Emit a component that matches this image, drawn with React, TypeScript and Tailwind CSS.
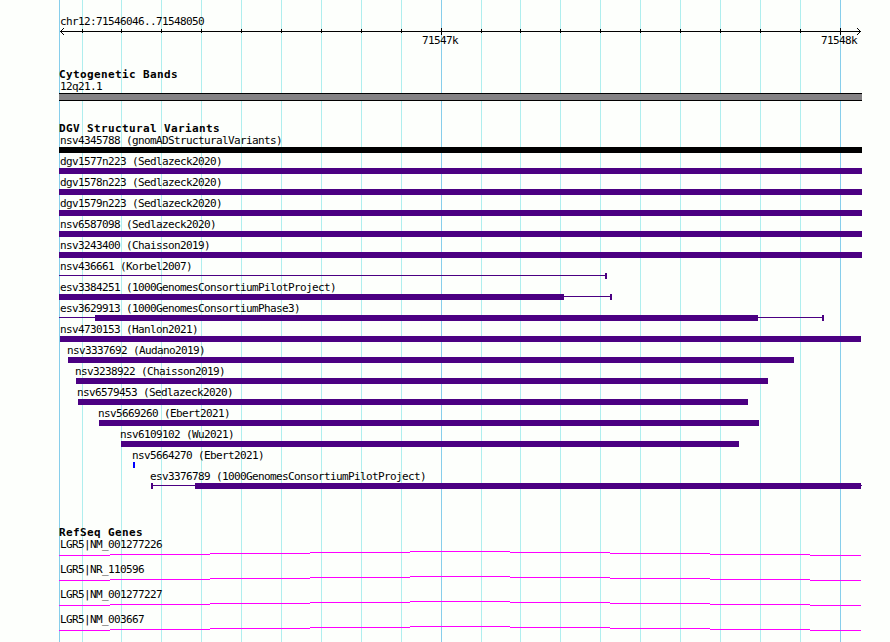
import { clsx } from "clsx";

interface Segment {
  from: number;
  to: number;
  kind: "thick" | "thin";
}

interface Variant {
  name: string;
  labelX: number;
  color?: string;
  segments: Segment[];
}

// x coordinates are measured from the left edge of the browser panel
const thick = (from: number, to: number): Segment => ({ from, to, kind: "thick" });
const thin = (from: number, to: number): Segment => ({ from, to, kind: "thin" });

const majorLines = [59, 441, 840];
const minorLines = [82, 121, 161, 201, 241, 281, 321, 361, 401, 481, 520, 560, 600, 640, 680, 720, 760, 800];

const variants: Variant[] = [
  { name: "nsv4345788 (gnomADStructuralVariants)", labelX: 60, color: "#000000", segments: [thick(59, 862)] },
  { name: "dgv1577n223 (Sedlazeck2020)", labelX: 60, segments: [thick(59, 862)] },
  { name: "dgv1578n223 (Sedlazeck2020)", labelX: 60, segments: [thick(59, 862)] },
  { name: "dgv1579n223 (Sedlazeck2020)", labelX: 60, segments: [thick(59, 862)] },
  { name: "nsv6587098 (Sedlazeck2020)", labelX: 60, segments: [thick(59, 862)] },
  { name: "nsv3243400 (Chaisson2019)", labelX: 60, segments: [thick(59, 862)] },
  { name: "nsv436661 (Korbel2007)", labelX: 60, segments: [thin(59, 605), thick(605, 607)] },
  {
    name: "esv3384251 (1000GenomesConsortiumPilotProject)",
    labelX: 60,
    segments: [thick(59, 564), thin(564, 610), thick(610, 612)],
  },
  {
    name: "esv3629913 (1000GenomesConsortiumPhase3)",
    labelX: 60,
    segments: [thin(59, 95), thick(95, 758), thin(758, 822), thick(822, 824)],
  },
  { name: "nsv4730153 (Hanlon2021)", labelX: 60, segments: [thick(60, 861)] },
  { name: "nsv3337692 (Audano2019)", labelX: 67, segments: [thick(68, 794)] },
  { name: "nsv3238922 (Chaisson2019)", labelX: 75, segments: [thick(76, 768)] },
  { name: "nsv6579453 (Sedlazeck2020)", labelX: 77, segments: [thick(78, 748)] },
  { name: "nsv5669260 (Ebert2021)", labelX: 98, segments: [thick(99, 759)] },
  { name: "nsv6109102 (Wu2021)", labelX: 120, segments: [thick(121, 739)] },
  { name: "nsv5664270 (Ebert2021)", labelX: 132, color: "#0000ff", segments: [thick(133, 135)] },
  {
    name: "esv3376789 (1000GenomesConsortiumPilotProject)",
    labelX: 150,
    segments: [thick(151, 153), thin(153, 195), thick(195, 861), thin(861, 862)],
  },
];

const genes = ["LGR5|NM_001277226", "LGR5|NR_110596", "LGR5|NM_001277227", "LGR5|NM_003667"];

// intron hat, one pixel step per 100px
const intronSteps = [
  [59, 110, 4],
  [110, 210, 3],
  [210, 310, 2],
  [310, 410, 1],
  [410, 510, 0],
  [510, 610, 1],
  [610, 710, 2],
  [710, 810, 3],
  [810, 861, 4],
];

function GridLines() {
  return (
    <svg className="absolute inset-0" width="890" height="642" shapeRendering="crispEdges">
      {minorLines.map((x) => <rect key={x} x={x} y="0" width="1" height="642" fill="#afeeee" />)}
      {majorLines.map((x) => <rect key={x} x={x} y="0" width="1" height="642" fill="#87ceeb" />)}
    </svg>
  );
}

function Ruler() {
  return (
    <svg className="block" width="890" height="7" shapeRendering="crispEdges">
      <rect x="60" y="3" width="801" height="1" />
      {minorLines.map((x) => <rect key={x} x={x} y="1" width="1" height="4" />)}
      {majorLines.slice(1).map((x) => <rect key={x} x={x} y="0" width="1" height="7" />)}
      {[1, 2, 3].map((d) => (
        <g key={d}>
          <rect x={60 + d} y={3 - d} width="1" height="1" />
          <rect x={60 + d} y={3 + d} width="1" height="1" />
          <rect x={860 - d} y={3 - d} width="1" height="1" />
          <rect x={860 - d} y={3 + d} width="1" height="1" />
        </g>
      ))}
    </svg>
  );
}

function TrackTitle({ children }: { children: string }) {
  return <h2 className="pl-[59px] h-3 leading-[13px] font-bold tracking-[0.38px]">{children}</h2>;
}

function VariantRow({ variant }: { variant: Variant }) {
  const { name, labelX, segments, color = "#4b0082" } = variant;
  return (
    <div className="h-[21px]">
      <div className="h-[13px]" style={{ paddingLeft: labelX }}>{name}</div>
      <div className="flex h-1.5" style={{ paddingLeft: segments[0].from }}>
        {segments.map((s) => (
          <div
            key={s.from}
            className={clsx("shrink-0", s.kind === "thick" ? "h-1.5" : "h-px mt-0.5")}
            style={{ width: s.to - s.from, backgroundColor: color }}
          />
        ))}
      </div>
    </div>
  );
}

function GeneRow({ name }: { name: string }) {
  return (
    <div className="h-[25px]">
      <div className="h-[13px] pl-[60px]">{name}</div>
      <svg className="block" width="890" height="5" shapeRendering="crispEdges">
        {intronSteps.map(([from, to, y]) => (
          <rect key={from} x={from} y={y} width={to - from} height="1" fill="#ff00ff" />
        ))}
      </svg>
    </div>
  );
}

export default function App() {
  return (
    <div className="relative w-[890px] h-[642px] overflow-hidden bg-[#fdfffc] text-black font-['DejaVu_Sans_Mono',monospace] text-[11px] leading-[13px] tracking-[-0.62px] whitespace-pre">
      <GridLines />
      <div className="relative">
        <header className="pt-[15px] h-[68px]">
          <div className="pl-[60px] h-[13px]">chr12:71546046..71548050</div>
          <Ruler />
          <div className="flex -mt-px pl-[422px]">
            <span className="w-[399px]">71547k</span>
            <span>71548k</span>
          </div>
        </header>

        <section className="h-[54px]">
          <TrackTitle>Cytogenetic Bands</TrackTitle>
          <div className="h-[13px] pl-[60px]">12q21.1</div>
          <div className="ml-[59px] w-[803px] h-2 border-y border-black bg-[#848284]" />
        </section>

        <section className="h-[404px]">
          <TrackTitle>DGV Structural Variants</TrackTitle>
          {variants.map((v) => <VariantRow key={v.name} variant={v} />)}
        </section>

        <section>
          <TrackTitle>RefSeq Genes</TrackTitle>
          {genes.map((g) => <GeneRow key={g} name={g} />)}
        </section>
      </div>
    </div>
  );
}
